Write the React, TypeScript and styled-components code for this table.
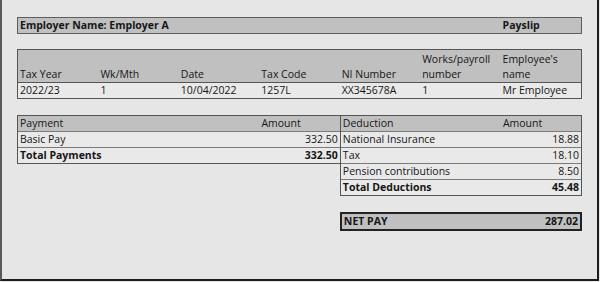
import React from 'react';
import styled, { createGlobalStyle } from 'styled-components';

const GlobalStyle = createGlobalStyle`
  html, body {
    margin: 0;
    padding: 0;
    background: #e6e6e6;
  }
  body {
    font-family: "Open Sans", "Liberation Sans", sans-serif;
  }
`;

const Sheet = styled.div`
  box-sizing: border-box;
  width: 599px;
  height: 281px;
  background: #e6e6e6;
  border-left: 2px solid #5a5a5a;
  border-right: 2px solid #1e1e1e;
  border-bottom: 2px solid #1e1e1e;
  padding: 17px 0 0 15px;
  color: #161616;
  font-size: 10.5px;
  line-height: 15px;
`;

const TitleBar = styled.div`
  box-sizing: border-box;
  display: grid;
  grid-template-columns: repeat(7, 1fr);
  width: 565px;
  height: 17px;
  background: #c0c0c0;
  border: 1px solid #5e5e5e;
  font-weight: 700;

  .employer {
    grid-column: span 6;
    padding-left: 2px;
  }
  .doc {
    padding-left: 2px;
  }
`;

const InfoTable = styled.div`
  box-sizing: border-box;
  width: 565px;
  margin-top: 15px;
  border: 1px solid #555;
`;

const InfoRow = styled.div<{ $head?: boolean }>`
  display: grid;
  grid-template-columns: repeat(7, 1fr);
  align-items: end;
  height: ${p => (p.$head ? '32px' : '15px')};
  background: ${p => (p.$head ? '#c0c0c0' : '#e9e9e9')};
  border-top: ${p => (p.$head ? 'none' : '1px solid #555')};

  span {
    padding: 0 2px 0 2px;
    white-space: pre-line;
  }
`;

const Lower = styled.div`
  display: grid;
  grid-template-columns: repeat(7, 1fr);
  width: 565px;
  margin-top: 16px;
  align-items: start;
`;

const Table = styled.div<{ $from: number; $span: number; $open?: boolean }>`
  box-sizing: border-box;
  grid-column: ${p => p.$from} / span ${p => p.$span};
  border: 1px solid #555;
  border-right: ${p => (p.$open ? 'none' : '1px solid #555')};
`;

const Row = styled.div<{ $cols: string; $head?: boolean; $bold?: boolean }>`
  display: grid;
  grid-template-columns: ${p => p.$cols};
  height: 15px;
  background: ${p => (p.$head ? '#c0c0c0' : '#e9e9e9')};
  font-weight: ${p => (p.$bold ? 700 : 400)};
  & + & {
    border-top: 1px solid #7a7a7a;
  }
`;

const Label = styled.span`
  padding-left: 2px;
  white-space: nowrap;
`;

const Amount = styled.span<{ $head?: boolean }>`
  text-align: ${p => (p.$head ? 'left' : 'right')};
  padding: ${p => (p.$head ? '0 0 0 2px' : '0 2px 0 0')};
`;

const NetPay = styled.div`
  box-sizing: border-box;
  grid-column: 5 / span 3;
  display: flex;
  justify-content: space-between;
  height: 19px;
  margin-top: 16px;
  padding: 0 2px;
  background: #c0c0c0;
  border: 2px solid #222;
  font-weight: 700;
`;

const infoHead = ['Tax Year', 'Wk/Mth', 'Date', 'Tax Code', 'NI Number', 'Works/payroll\nnumber', "Employee's\nname"];
const infoData = ['2022/23', '1', '10/04/2022', '1257L', 'XX345678A', '1', 'Mr Employee'];

const deductions = [
  ['National Insurance', '18.88'],
  ['Tax', '18.10'],
  ['Pension contributions', '8.50'],
];

export default function App() {
  return (
    <>
      <GlobalStyle />
      <Sheet>
        <TitleBar>
          <span className="employer">Employer Name: Employer A</span>
          <span className="doc">Payslip</span>
        </TitleBar>

        <InfoTable>
          <InfoRow $head>
            {infoHead.map(h => (
              <span key={h}>{h}</span>
            ))}
          </InfoRow>
          <InfoRow>
            {infoData.map((d, i) => (
              <span key={i}>{d}</span>
            ))}
          </InfoRow>
        </InfoTable>

        <Lower>
          <Table $from={1} $span={4} $open>
            <Row $cols="3fr 1fr" $head>
              <Label>Payment</Label>
              <Amount $head>Amount</Amount>
            </Row>
            <Row $cols="3fr 1fr">
              <Label>Basic Pay</Label>
              <Amount>332.50</Amount>
            </Row>
            <Row $cols="3fr 1fr" $bold>
              <Label>Total Payments</Label>
              <Amount>332.50</Amount>
            </Row>
          </Table>

          <Table $from={5} $span={3}>
            <Row $cols="2fr 1fr" $head>
              <Label>Deduction</Label>
              <Amount $head>Amount</Amount>
            </Row>
            {deductions.map(([name, value]) => (
              <Row $cols="2fr 1fr" key={name}>
                <Label>{name}</Label>
                <Amount>{value}</Amount>
              </Row>
            ))}
            <Row $cols="2fr 1fr" $bold>
              <Label>Total Deductions</Label>
              <Amount>45.48</Amount>
            </Row>
          </Table>

          <NetPay>
            <span>NET PAY</span>
            <span>287.02</span>
          </NetPay>
        </Lower>
      </Sheet>
    </>
  );
}
